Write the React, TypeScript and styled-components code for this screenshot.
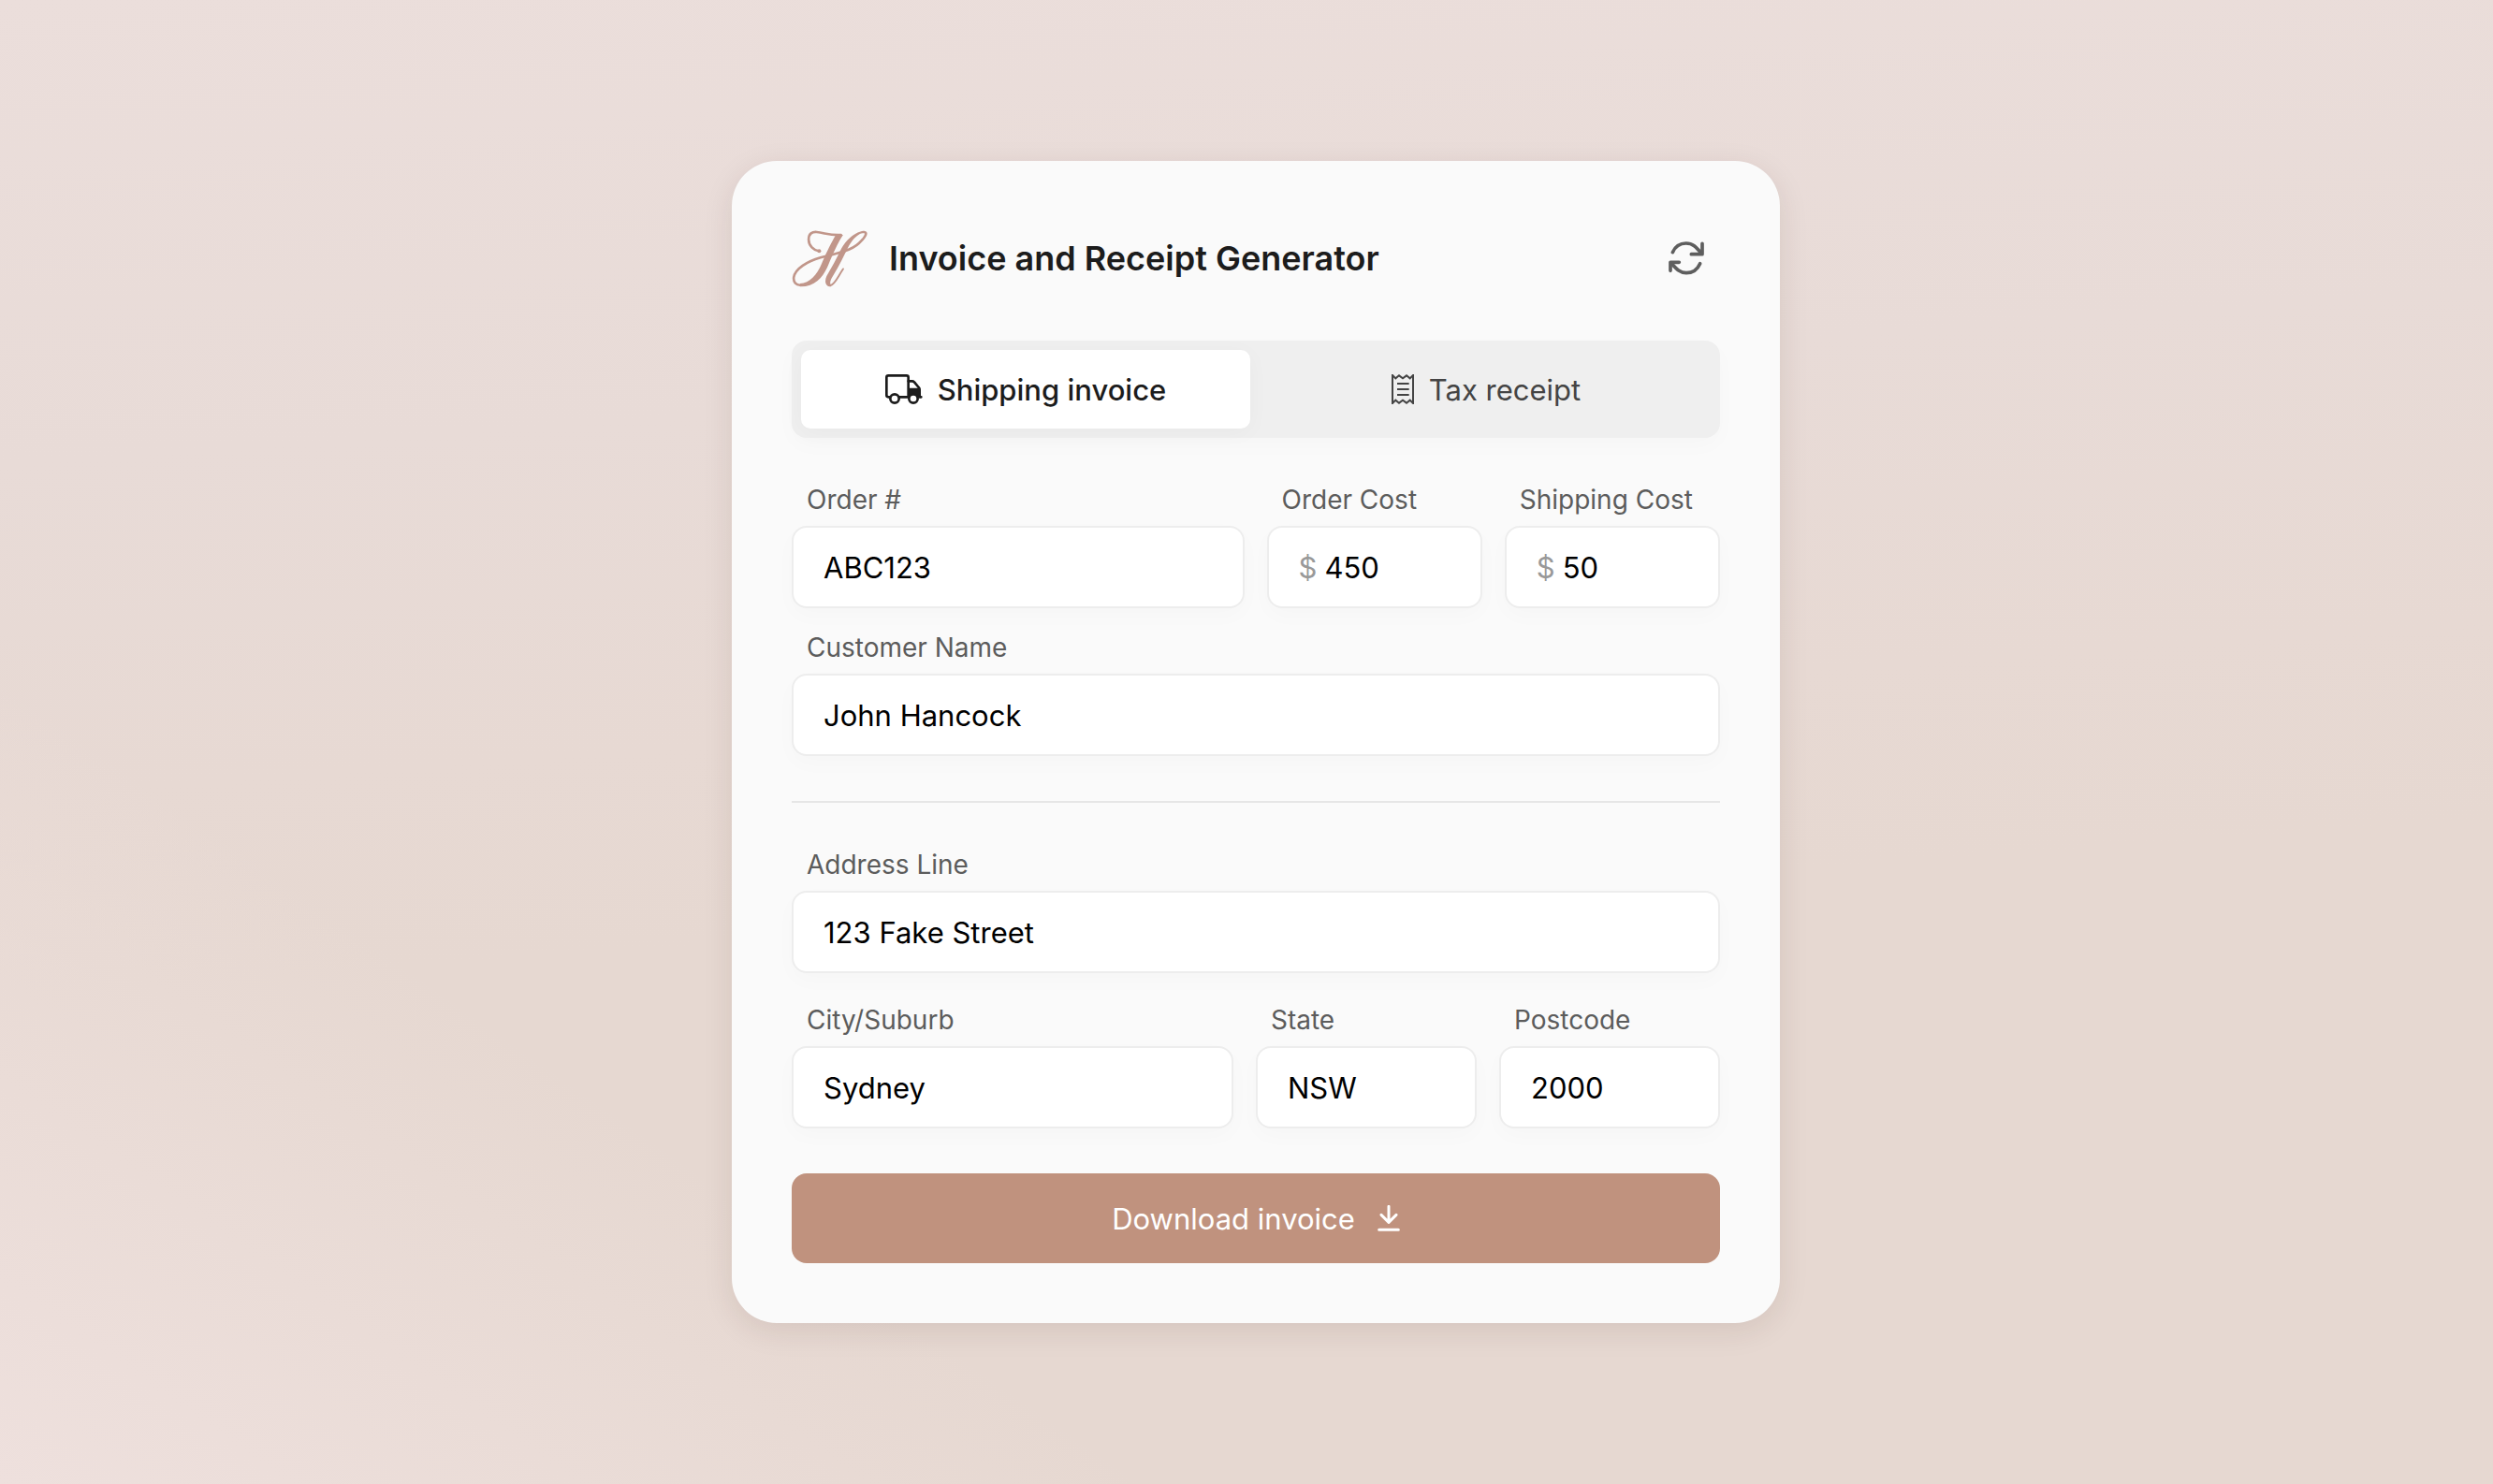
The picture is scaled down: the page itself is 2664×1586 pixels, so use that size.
import React, { useState } from "react";
import styled, { createGlobalStyle, css } from "styled-components";

const GlobalStyle = createGlobalStyle`
  * { box-sizing: border-box; }
  body {
    margin: 0;
    font-family: Inter, "Liberation Sans", sans-serif;
    -webkit-font-smoothing: antialiased;
  }
  button, input { font: inherit; }
`;

const Page = styled.main`
  min-height: 100vh;
  padding: 48px 0 48px 20px;
  display: flex;
  align-items: center;
  justify-content: center;
  background:
    linear-gradient(35deg, #eee0dd 0%, rgba(238, 224, 221, 0) 25%),
    linear-gradient(176deg, #ebdedb 0%, #e8dbd7 28%, #e7d9d3 48%, #e6d8d1 60%, #e6d8d1 100%);
`;

const Card = styled.form`
  width: 100%;
  max-width: 1120px;
  padding: 64px;
  border-radius: 48px;
  background: #fafafa;
  box-shadow: 0 8px 32px rgba(60, 30, 20, 0.1);
`;

const Header = styled.header`
  display: flex;
  align-items: center;
  height: 80px;
  margin-bottom: 48px;
`;

const Title = styled.h1`
  flex: 1;
  margin: 0 0 0 22px;
  font-size: 36px;
  line-height: 48px;
  font-weight: 600;
  color: #1c1c1c;
`;

const IconButton = styled.button`
  display: flex;
  align-items: center;
  justify-content: center;
  width: 72px;
  height: 72px;
  padding: 0;
  border: 0;
  border-radius: 16px;
  background: transparent;
  color: #5e5e5e;
  cursor: pointer;
`;

const Tabs = styled.div`
  display: grid;
  grid-template-columns: 1fr 1fr;
  gap: 12px;
  padding: 10px;
  margin-bottom: 48px;
  border-radius: 16px;
  background: #efefef;
  box-shadow: 0 8px 24px rgba(0, 0, 0, 0.02);
`;

const Tab = styled.button<{ $active: boolean }>`
  display: flex;
  align-items: center;
  justify-content: center;
  gap: 16px;
  height: 84px;
  padding: 0 16px;
  border: 0;
  border-radius: 10px;
  background: transparent;
  color: #444;
  font-size: 31px;
  cursor: pointer;
  ${(p) =>
    p.$active &&
    css`
      background: #fff;
      color: #1c1c1c;
      font-weight: 500;
      box-shadow: 0 4px 24px rgba(0, 0, 0, 0.03);
    `}
`;

const Row = styled.div<{ $columns?: string; $space: number }>`
  display: grid;
  grid-template-columns: ${(p) => p.$columns ?? "1fr"};
  gap: 24px;
  margin-bottom: ${(p) => p.$space}px;
`;

const FieldBox = styled.div`
  display: flex;
  flex-direction: column;
  gap: 10px;
  min-width: 0;
`;

const Label = styled.label`
  padding-left: 16px;
  font-size: 28px;
  line-height: 36px;
  font-weight: 400;
  color: #5c5c5c;
  white-space: nowrap;
`;

const InputShell = styled.div`
  display: flex;
  align-items: center;
  gap: 8px;
  height: 88px;
  padding: 0 32px;
  border: 2px solid #ededed;
  border-radius: 16px;
  background: #fff;
  box-shadow: 0 8px 24px rgba(0, 0, 0, 0.02);
  font-size: 31px;
`;

const Prefix = styled.span`
  color: #999;
`;

const Input = styled.input`
  flex: 1;
  min-width: 0;
  height: 100%;
  padding: 0;
  border: 0;
  outline: 0;
  background: transparent;
  color: #000;
`;

const Divider = styled.hr`
  height: 2px;
  margin: 0 0 48px;
  border: 0;
  background: #e6e6e6;
`;

const Download = styled.button`
  display: flex;
  align-items: center;
  justify-content: center;
  gap: 24px;
  width: 100%;
  height: 96px;
  border: 0;
  border-radius: 16px;
  background: #c0927e;
  color: #fff;
  font-size: 31px;
  font-weight: 400;
  cursor: pointer;
`;

const Logo = () => (
  <svg width="82" height="61" viewBox="0 0 246 184" fill="none" role="img" aria-label="H">
    <g fill="#c1968a">
      <path d="M142 14C128 38 108 78 96 108C80 146 58 170 26 172L26 182C72 183 98 154 114 120C126 92 146 42 165 15Z" />
      <path d="M232 2C205 4 176 30 160 58C144 92 128 120 112 148C104 166 108 182 126 182L128 176C119 174 125 158 133 146C152 116 168 82 184 50C197 27 216 9 232 9Z" />
      <circle cx="88" cy="67" r="6" />
    </g>
    <g stroke="#c1968a" strokeWidth="8" strokeLinecap="round" strokeLinejoin="round">
      <path d="M88 68C70 65 54 50 54 30C54 10 66 5 80 6C106 9 128 18 158 15" />
      <path d="M28 177C14 178 4 168 6 152C10 124 50 100 92 88C140 76 188 68 216 42C236 24 246 6 232 6" />
      <path d="M124 178C138 176 148 150 165 125" strokeWidth="6" />
    </g>
  </svg>
);

const RefreshIcon = () => (
  <svg width="38" height="36" viewBox="0 0 114 108" fill="none" stroke="currentColor" strokeWidth="11" strokeLinecap="round" strokeLinejoin="round">
    <path d="M13 35C21 17 37 6 56 6C78 6 88 18 105 38" />
    <path d="M108 7V41H73" />
    <path d="M101 71C93 89 77 101 57 101C36 101 26 89 9 70" />
    <path d="M6 94V67H34" />
  </svg>
);

const TruckIcon = () => (
  <svg width="40" height="32" viewBox="0 0 120 96" fill="none" stroke="currentColor" strokeWidth="8" strokeLinecap="round" strokeLinejoin="round">
    <path d="M14 73H10A6 6 0 0 1 4 67V10A6 6 0 0 1 10 4H68A6 6 0 0 1 74 10V73H40" />
    <path d="M74 22H86Q90 22 93 25L107 42Q110 45 110 50V73H115" />
    <path d="M74 46H110V74H74Z" fill="currentColor" strokeWidth="4" />
    <circle cx="30" cy="78" r="14" fill="#fff" />
    <circle cx="90" cy="78" r="14" fill="#fff" />
  </svg>
);

const ReceiptIcon = () => (
  <svg width="24" height="32" viewBox="0 0 72 96" fill="none" stroke="currentColor" strokeWidth="6">
    <path d="M3 3L13 13L24 4L36 13L48 4L59 13L69 3V93L59 83L48 92L36 83L24 92L13 83L3 93Z" />
    <path d="M18 30H56M18 48H56M18 66H56" />
  </svg>
);

const DownloadIcon = () => (
  <svg width="24" height="28" viewBox="0 0 72 84" fill="none" stroke="currentColor" strokeWidth="9" strokeLinecap="round" strokeLinejoin="round">
    <path d="M36 4V54M12 31L36 55L60 31M5 79H67" />
  </svg>
);

type FieldProps = { id: string; label: string; value: string; prefix?: string };

const Field = ({ id, label, value, prefix }: FieldProps) => (
  <FieldBox>
    <Label htmlFor={id}>{label}</Label>
    <InputShell>
      {prefix && <Prefix>{prefix}</Prefix>}
      <Input id={id} name={id} type="text" defaultValue={value} />
    </InputShell>
  </FieldBox>
);

export default function App() {
  const [tab, setTab] = useState<"invoice" | "receipt">("invoice");
  return (
    <>
      <GlobalStyle />
      <Page>
        <Card onSubmit={(e) => e.preventDefault()}>
          <Header>
            <Logo />
            <Title>Invoice and Receipt Generator</Title>
            <IconButton type="reset" aria-label="Reset form">
              <RefreshIcon />
            </IconButton>
          </Header>
          <Tabs role="tablist">
            <Tab type="button" role="tab" aria-selected={tab === "invoice"} $active={tab === "invoice"} onClick={() => setTab("invoice")}>
              <TruckIcon />
              Shipping invoice
            </Tab>
            <Tab type="button" role="tab" aria-selected={tab === "receipt"} $active={tab === "receipt"} onClick={() => setTab("receipt")}>
              <ReceiptIcon />
              Tax receipt
            </Tab>
          </Tabs>
          <Row $columns="21fr 10fr 10fr" $space={24}>
            <Field id="order" label="Order #" value="ABC123" />
            <Field id="order-cost" label="Order Cost" value="450" prefix="$" />
            <Field id="shipping-cost" label="Shipping Cost" value="50" prefix="$" />
          </Row>
          <Row $space={48}>
            <Field id="customer" label="Customer Name" value="John Hancock" />
          </Row>
          <Divider />
          <Row $space={32}>
            <Field id="address" label="Address Line" value="123 Fake Street" />
          </Row>
          <Row $columns="2fr 1fr 1fr" $space={48}>
            <Field id="city" label="City/Suburb" value="Sydney" />
            <Field id="state" label="State" value="NSW" />
            <Field id="postcode" label="Postcode" value="2000" />
          </Row>
          <Download type="submit">
            Download invoice
            <DownloadIcon />
          </Download>
        </Card>
      </Page>
    </>
  );
}
